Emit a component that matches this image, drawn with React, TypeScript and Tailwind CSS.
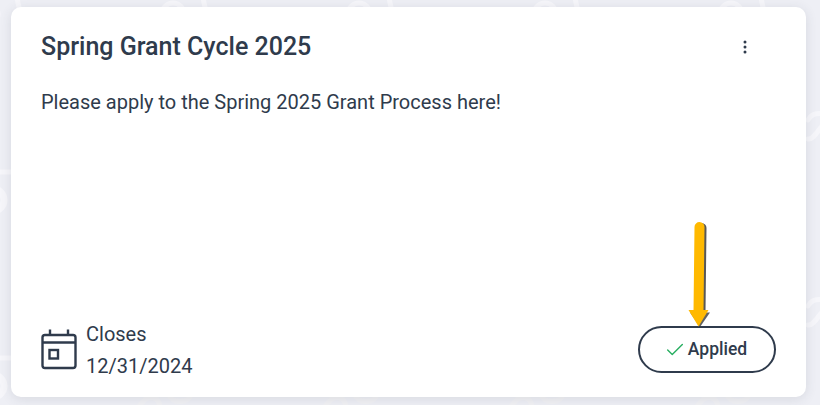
import React from "react"
import { Check } from "lucide-react"

const topRings = [-13, 173, 359, 545, 731]
const bottomMarks = [151, 337, 523, 709]
const sideRows = [0, 186]

// faint watermark behind the card
function Watermark() {
  return (
    <svg className="absolute inset-0" width="820" height="405" viewBox="0 0 820 405" fill="none" stroke="#f6f6fa" strokeWidth="5" strokeLinecap="round">
      {topRings.map((x) => (
        <g key={x}>
          <circle cx={x} cy={14} r={11} />
          <path d={`M${x + 30} -2L${x + 33} 12`} />
        </g>
      ))}
      {bottomMarks.map((x) => (
        <g key={x} stroke="#f1f1f4">
          <path d={`M${x - 13} 408C${x - 8} 400 ${x - 3} 396 ${x + 3} 398C${x + 8} 400 ${x + 9} 404 ${x + 9} 408`} />
          <path d={`M${x + 18} 394C${x + 20} 404 ${x + 38} 404 ${x + 40} 394`} />
        </g>
      ))}
      {sideRows.map((y) => (
        <g key={y}>
          <path d={`M-2 ${y + 172}L10 ${y + 172}`} />
          <circle cx={-7} cy={y + 200} r={11} strokeWidth="7" />
          <path d={`M824 ${y + 114}C814 ${y + 112} 810 ${y + 116} 808 ${y + 120}`} />
          <path d={`M822 ${y + 126}C816 ${y + 134} 812 ${y + 140} 808 ${y + 139}`} />
        </g>
      ))}
    </svg>
  )
}

function CalendarIcon() {
  return (
    <svg width="36" height="42" viewBox="0 0 36 42" fill="none" stroke="#2f3b4c" strokeWidth="2.4">
      <rect x="1.5" y="6" width="33" height="33" rx="2.5" />
      <path d="M1.5 13.5h33" />
      <path d="M9 0.5v5.5M27 0.5v5.5" />
      <rect x="8.5" y="21" width="8.5" height="8.5" />
    </svg>
  )
}

function Arrow() {
  return (
    <svg className="absolute left-[680px] top-[216px]" width="40" height="116" viewBox="0 0 40 116" fill="none">
      <path d="M21.5 12L20.5 96" stroke="#3a3a3a" strokeWidth="10" strokeLinecap="round" opacity="0.85" />
      <path d="M10 96.5H30L20 111Z" fill="#3a3a3a" opacity="0.8" />
      <path d="M19.5 11L18.5 96" stroke="#ffb900" strokeWidth="10" strokeLinecap="round" />
      <path d="M8.5 94H28.5L18.5 110.5Z" fill="#ffb900" />
    </svg>
  )
}

export default function App() {
  return (
    <div className="relative h-[405px] w-[820px] overflow-hidden bg-[#eeeff5] pl-[11px] pt-[7px] font-['Roboto',sans-serif] text-[#2f3b4c]">
      <Watermark />

      <div className="relative flex h-[390px] w-[795px] flex-col justify-between rounded-[10px] bg-white px-[30px] pb-[15px] pt-[24px] shadow-[0_2px_12px_rgba(47,59,76,0.12)]">
        <div>
          <div className="flex items-center justify-between">
            <h1 className="text-[25px] font-medium leading-[32px]">Spring Grant Cycle 2025</h1>
            <svg className="mr-[29px]" width="4" height="14" viewBox="0 0 4 14" fill="#2f3b4c">
              <circle cx="2" cy="2" r="1.5" />
              <circle cx="2" cy="7" r="1.5" />
              <circle cx="2" cy="12" r="1.5" />
            </svg>
          </div>
          <p className="mt-[27px] text-[20px] leading-[24px]">Please apply to the Spring 2025 Grant Process here!</p>
        </div>
        <div className="flex items-center justify-between">
          <div className="flex items-center gap-[9px]">
            <CalendarIcon />
            <div className="text-[20px] leading-[32px]">
              <div>Closes</div>
              <div>12/31/2024</div>
            </div>
          </div>
          <button className="mb-[1px] flex h-[47px] w-[138px] items-center justify-center gap-[2px] rounded-full border-2 border-[#2f3b4c] pr-[3px] text-[17.5px] font-medium">
            <Check size={22} strokeWidth={1.5} className="text-[#27ae60]" />
            Applied
          </button>
        </div>
      </div>
      <Arrow />
    </div>
  )
}
